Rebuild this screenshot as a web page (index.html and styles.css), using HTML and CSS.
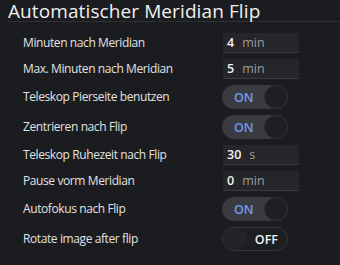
FILE: index.html
```html
<!DOCTYPE html>
<html>
<head>
<meta charset="utf-8">
<link rel="stylesheet" href="styles.css">
</head>
<body>
<div class="panel">
  <h1 class="title">Automatischer Meridian Flip</h1>
  <div class="rows">
    <div class="label">Minuten nach Meridian</div>
    <div class="input"><span class="val">4</span><span class="unit">min</span></div>

    <div class="label">Max. Minuten nach Meridian</div>
    <div class="input"><span class="val">5</span><span class="unit">min</span></div>

    <div class="label">Teleskop Pierseite benutzen</div>
    <div class="toggle on"><span class="txt">ON</span><span class="knob"></span></div>

    <div class="label">Zentrieren nach Flip</div>
    <div class="toggle on"><span class="txt">ON</span><span class="knob"></span></div>

    <div class="label">Teleskop Ruhezeit nach Flip</div>
    <div class="input"><span class="val">30</span><span class="unit">s</span></div>

    <div class="label">Pause vorm Meridian</div>
    <div class="input"><span class="val">0</span><span class="unit">min</span></div>

    <div class="label">Autofokus nach Flip</div>
    <div class="toggle on"><span class="txt">ON</span><span class="knob"></span></div>

    <div class="label">Rotate image after flip</div>
    <div class="toggle off"><span class="knob"></span><span class="txt">OFF</span></div>
  </div>
</div>
</body>
</html>
```
FILE: styles.css
```css
html, body {
  margin: 0;
  padding: 0;
  background: #1b1c1f;
  width: 340px;
  height: 265px;
  overflow: hidden;
}
.panel {
  font-family: "Open Sans", "Noto Sans", sans-serif;
  color: #e6e6e6;
  padding: 0 0 0 8px;
}
.title {
  margin: 0;
  font-weight: 400;
  font-size: 19px;
  line-height: 20px;
  height: 20px;
  padding-top: 1px;
  border-bottom: 1px solid #2f3034;
  color: #f0f0f0;
  white-space: nowrap;
  letter-spacing: 0.1px;
}
.rows {
  display: grid;
  grid-template-columns: 200px 76px;
  row-gap: 6px;
  padding: 11px 0 0 15px;
  align-items: center;
}
.label {
  font-size: 12px;
  letter-spacing: -0.4px;
  color: #e2e2e2;
  white-space: nowrap;
  margin-top: -2px;
}
.input {
  height: 20px;
  box-sizing: border-box;
  background: #25262a;
  border-bottom: 1px solid #3a3b3f;
  display: flex;
  align-items: center;
  gap: 8px;
  padding-left: 4px;
  font-size: 12.5px;
}
.val {
  color: #f2f2f2;
  font-weight: 600;
}
.unit {
  color: #9c9c9e;
}
.toggle {
  width: 66px;
  height: 24px;
  box-sizing: border-box;
  border-radius: 12px;
  display: flex;
  align-items: center;
  justify-content: space-between;
  margin-left: -1px;
  font-size: 12.5px;
  font-weight: 600;
}
.toggle.on {
  background: #3a3b40;
  padding-left: 12px;
}
.toggle.on .txt {
  color: #6b9cf0;
}
.toggle.off {
  background: #1d1e21;
  border: 1px solid #35363a;
  padding-right: 9px;
}
.toggle.off .txt {
  color: #f2f2f2;
}
.knob {
  width: 24px;
  height: 24px;
  box-sizing: border-box;
  border-radius: 50%;
  background: #1e1f22;
  border: 1px solid #2c2d31;
}
.toggle.off .knob {
  width: 24px;
  height: 22px;
  background: #232427;
  border: none;
}
```
